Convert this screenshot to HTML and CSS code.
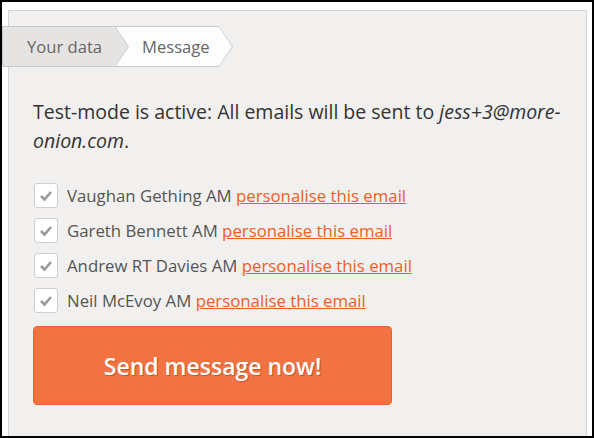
FILE: index.html
```html
<!DOCTYPE html>
<html lang="en">
<head>
    <meta charset="UTF-8">
    <meta name="viewport" content="width=device-width, initial-scale=1.0">
    <title>Send a message</title>
    <link rel="stylesheet" href="styles.css">
</head>
<body>

<div class="frame">
    <div class="panel">
        <div class="steps">
            <div class="step step-done">Your data</div>
            <div class="step step-current">Message</div>
        </div>

        <p class="notice">Test-mode is active: All emails will be sent to <em>jess+3@more-onion.com</em>.</p>

        <ul class="targets">
            <li class="target">
                <span class="check"><svg width="24" height="25" viewBox="0 0 24 25"><path d="M7 13 L10.5 16.5 L17 9" /></svg></span>
                <span class="name">Vaughan Gething AM <a href="#">personalise this email</a></span>
            </li>
            <li class="target">
                <span class="check"><svg width="24" height="25" viewBox="0 0 24 25"><path d="M7 13 L10.5 16.5 L17 9" /></svg></span>
                <span class="name">Gareth Bennett AM <a href="#">personalise this email</a></span>
            </li>
            <li class="target">
                <span class="check"><svg width="24" height="25" viewBox="0 0 24 25"><path d="M7 13 L10.5 16.5 L17 9" /></svg></span>
                <span class="name">Andrew RT Davies AM <a href="#">personalise this email</a></span>
            </li>
            <li class="target">
                <span class="check"><svg width="24" height="25" viewBox="0 0 24 25"><path d="M7 13 L10.5 16.5 L17 9" /></svg></span>
                <span class="name">Neil McEvoy AM <a href="#">personalise this email</a></span>
            </li>
        </ul>

        <button class="send">Send message now!</button>
    </div>
</div>

</body>
</html>
```

FILE: styles.css
```css
body {
    margin: 0;
    font-family: "Open Sans", "Noto Sans", sans-serif;
    background: #fff;
}
.frame {
    width: 594px;
    height: 438px;
    box-sizing: border-box;
    border: 2px solid #000;
    padding: 8px 5px 0 6px;
    overflow: hidden;
    background: #fff;
}
.panel {
    height: 100%;
    border: 1px solid #d5d5d5;
    border-bottom: none;
    background: #f1f0ee;
    padding: 15px 24px 0 24px;
}
.steps {
    display: flex;
    margin-left: -31px;
}
.step {
    position: relative;
    display: flex;
    align-items: center;
    height: 39px;
    border-top: 1px solid #c8c8c8;
    border-bottom: 1px solid #c8c8c8;
    font-size: 16.6px;
    color: #666;
}
.step::before,
.step::after {
    content: "";
    position: absolute;
    left: 100%;
    clip-path: polygon(0 0, 100% 50%, 0 100%);
}
.step::before {
    top: -1px;
    width: 14px;
    height: 41px;
    background: #c8c8c8;
}
.step::after {
    top: 0;
    width: 13px;
    height: 39px;
}
.step-done {
    z-index: 2;
    width: 88px;
    padding: 0 0 0 24px;
    border-left: 1px solid #c8c8c8;
    background: #e5e4e2;
}
.step-done::after {
    background: #e5e4e2;
}
.step-current {
    z-index: 1;
    width: 77px;
    padding: 0 0 0 27px;
    background: #fdfdfd;
}
.step-current::after {
    background: #fdfdfd;
}
.notice {
    margin: 30px 0 0;
    font-size: 19.5px;
    line-height: 29px;
    color: #333;
}
.targets {
    list-style: none;
    margin: 23px 0 0;
    padding: 0;
}
.target {
    display: flex;
    align-items: center;
    height: 35px;
    font-size: 16.8px;
    color: #555;
}
.check {
    display: flex;
    width: 24px;
    height: 25px;
    box-sizing: border-box;
    margin: 0 9px 0 1px;
    border: 1px solid #cfcfcf;
    border-radius: 3px;
    background: #fff;
}
.check svg {
    margin: -1px;
}
.check path {
    fill: none;
    stroke: #9a9a9a;
    stroke-width: 2.6;
}
.name a {
    color: #f25c26;
    text-decoration: underline;
}
.send {
    display: block;
    margin-top: 8px;
    width: 359px;
    height: 79px;
    border: 1px solid #ec6128;
    border-radius: 4px;
    background: #f27342;
    color: #fff;
    font-family: "Open Sans", "Noto Sans", sans-serif;
    font-size: 23px;
    font-weight: 600;
    text-shadow: 1px 1px 0 #c9531f;
    cursor: pointer;
}
```
